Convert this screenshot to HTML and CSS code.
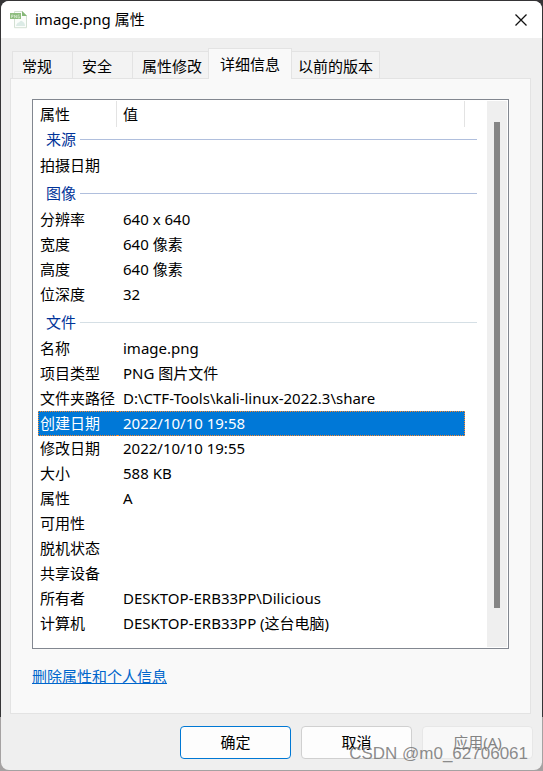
FILE: index.html
```html
<!DOCTYPE html>
<html lang="zh-CN">
<head>
<meta charset="utf-8">
<title>image.png 属性</title>
<link rel="stylesheet" href="styles.css">
</head>
<body>
<main class="window">
  <header class="titlebar">
    <svg class="file-icon" width="18" height="20" viewBox="0 0 18 20" aria-hidden="true">
      <path d="M4.5 1.5h8l4 4v12.200h-12z" fill="#fbfdfb" stroke="#d3e0d3"/>
      <path d="M12 1l5 5h-5z" fill="#86b878"/>
      <path d="M6 16q1-4 3-3.500 2-3 3.500-1 2.500 1 2.500 4.500z" fill="#dcebe6"/>
      <rect x="0" y="3" width="11" height="6" fill="#8fbd80"/>
      <path d="M1.500 8V5h1.500v1.500H1.500M4.500 8V5l2 3V5M9.500 5H8v3h1.500V6.500" fill="none" stroke="#d5e8cf" stroke-width=".7"/>
    </svg>
    <h1 class="title">image.png 属性</h1>
    <button class="close" type="button" aria-label="关闭">
      <svg width="14" height="14" viewBox="0 0 14 14"><path d="M1.500 1.500l11 11M12.500 1.500l-11 11" stroke="#111" stroke-width="1.300" fill="none"/></svg>
    </button>
  </header>

  <div class="content">
    <nav class="tabs" role="tablist">
      <button class="tab" type="button" role="tab">常规</button>
      <button class="tab" type="button" role="tab">安全</button>
      <button class="tab tab-wide" type="button" role="tab">属性修改</button>
      <button class="tab tab-active" type="button" role="tab" aria-selected="true">详细信息</button>
      <button class="tab tab-last" type="button" role="tab">以前的版本</button>
    </nav>

    <section class="panel" role="tabpanel">
      <div class="list">
        <table class="details">
          <colgroup><col class="col-name"><col><col class="col-end"></colgroup>
          <thead><tr><th>属性</th><th>值</th><td></td></tr></thead>
          <tbody>
            <tr class="group"><th colspan="3"><span>来源</span></th></tr>
            <tr><th>拍摄日期</th><td></td></tr>
            <tr class="group"><th colspan="3"><span>图像</span></th></tr>
            <tr><th>分辨率</th><td>640 x 640</td></tr>
            <tr><th>宽度</th><td>640 像素</td></tr>
            <tr><th>高度</th><td>640 像素</td></tr>
            <tr><th>位深度</th><td>32</td></tr>
            <tr class="group group-light"><th colspan="3"><span>文件</span></th></tr>
            <tr><th>名称</th><td>image.png</td></tr>
            <tr><th>项目类型</th><td>PNG 图片文件</td></tr>
            <tr><th>文件夹路径</th><td>D:\CTF-Tools\kali-linux-2022.3\share</td></tr>
            <tr class="selected"><th>创建日期</th><td>2022/10/10 19:58</td></tr>
            <tr><th>修改日期</th><td>2022/10/10 19:55</td></tr>
            <tr><th>大小</th><td>588 KB</td></tr>
            <tr><th>属性</th><td>A</td></tr>
            <tr><th>可用性</th><td></td></tr>
            <tr><th>脱机状态</th><td></td></tr>
            <tr><th>共享设备</th><td></td></tr>
            <tr><th>所有者</th><td>DESKTOP-ERB33PP\Dilicious</td></tr>
            <tr><th>计算机</th><td>DESKTOP-ERB33PP (这台电脑)</td></tr>
          </tbody>
        </table>
        <div class="scrollbar"><div class="thumb"></div></div>
      </div>
      <a class="remove" href="#">删除属性和个人信息</a>
    </section>
  </div>

  <footer class="actions">
    <button class="button button-default" type="button">确定</button>
    <button class="button" type="button">取消</button>
    <button class="button" type="button" disabled>应用(A)</button>
    <span class="watermark">CSDN @m0_62706061</span>
  </footer>
</main>
</body>
</html>
```
FILE: styles.css
```css
* {
  box-sizing: border-box;
}

body {
  margin: 0;
  min-height: 100vh;
  padding: 1px;
  display: flex;
  background: linear-gradient(#353436 93%, #a5a2a2 93%);
  font: 15px/25px "Noto Sans", "Noto Sans CJK SC", sans-serif;
  color: #000;
}

button {
  font: inherit;
  color: inherit;
  padding: 0;
}

.window {
  flex: 1;
  min-width: 0;
  display: flex;
  flex-direction: column;
  background: #efefef;
  border-radius: 8px;
  overflow: hidden;
}

.titlebar {
  height: 37px;
  display: flex;
  align-items: center;
  gap: 7px;
  padding: 0 14px 0 9px;
  background: #fff;
}

.title {
  flex: 1;
  margin: 0;
  font-size: 15px;
  font-weight: 400;
}

.close {
  display: flex;
  border: 0;
  background: none;
}

.content {
  flex: 1;
  display: flex;
  flex-direction: column;
  padding: 10px 11px 0 9px;
}

.tabs {
  display: flex;
  align-items: flex-end;
  padding-left: 2px;
}

.tab {
  height: 27px;
  padding: 2px 20px 0 9px;
  border: 1px solid #e3e3e3;
  border-width: 1px 0 0 1px;
  background: #f3f3f3;
  white-space: nowrap;
}

.tab-wide {
  padding-right: 6px;
}

.tab-active {
  height: 31px;
  margin-bottom: -1px;
  padding: 0 11px;
  border-right-width: 1px;
  background: #f9f9f9;
  z-index: 1;
}

.tab-last {
  padding: 2px 6px 0;
  border-width: 1px 1px 0 0;
}

.panel {
  flex: 1;
  padding: 20px 21px;
  border: 1px solid #e3e3e3;
  background: #f9f9f9;
}

.list {
  display: flex;
  justify-content: space-between;
  height: 550px;
  padding: 1px 1px 1px 5px;
  border: 1px solid #828790;
  background: #fff;
}

.details {
  flex: 1;
  align-self: flex-start;
  margin-right: 10px;
  table-layout: fixed;
  border-collapse: separate;
  border-spacing: 0;
}

.col-name {
  width: 79px;
}

.col-end {
  width: 12px;
}

.details tr {
  height: 25px;
}

.details th,
.details td {
  padding: 0;
  border: 0 dotted #ff8728;
  font-weight: 400;
  line-height: 23px;
  text-align: left;
  white-space: nowrap;
}

.details th {
  padding-left: 2px;
}

.details td {
  padding-left: 6px;
}

.details thead tr {
  height: 23px;
}

.details thead th {
  position: relative;
  padding-top: 3px;
  line-height: 20px;
}

.details thead th + th {
  padding-left: 6px;
}

.details thead th::after {
  content: "";
  position: absolute;
  top: 0;
  right: 0;
  width: 1px;
  height: 26px;
  background: #e3e3e3;
}

.details .group {
  height: 29px;
}

.details .group th {
  padding-top: 2px;
  color: #003399;
}

.group span {
  display: flex;
  align-items: center;
  gap: 4px;
  padding-left: 6px;
}

.group span::after {
  content: "";
  flex: 1;
  height: 1px;
  background: #b0bfdd;
}

.group-light span::after {
  background: #d5dfe5;
}

.details .selected th,
.details .selected td {
  border-width: 1px 0;
  background: #0078d7;
  background-clip: padding-box;
  color: #fff;
}

.details .selected th {
  border-left-width: 1px;
  padding-left: 1px;
}

.details .selected td {
  border-right-width: 1px;
}

.details .selected {
  background: #0078d7;
}

.scrollbar {
  width: 20px;
  padding: 21px 7px 39px;
  background: #efefef;
}

.thumb {
  width: 6px;
  height: 100%;
  background: #858585;
}

.remove {
  display: inline-block;
  margin-top: 15px;
  color: #0066cc;
}

.actions {
  position: relative;
  display: flex;
  justify-content: flex-end;
  gap: 10px;
  padding: 12px 9px 11px;
}

.button {
  width: 111px;
  height: 33px;
  border: 1px solid #d0d0d0;
  border-radius: 4px;
  background: #fdfdfd;
}

.button-default {
  border-color: #0078d4;
}

.button:disabled {
  border-color: #e7e7e7;
  background: #f8f8f8;
  color: #838383;
}

.watermark {
  position: absolute;
  right: 14px;
  bottom: 4px;
  font: 17px/25px "Liberation Sans", sans-serif;
  color: rgba(110, 110, 110, 0.8);
}
```
